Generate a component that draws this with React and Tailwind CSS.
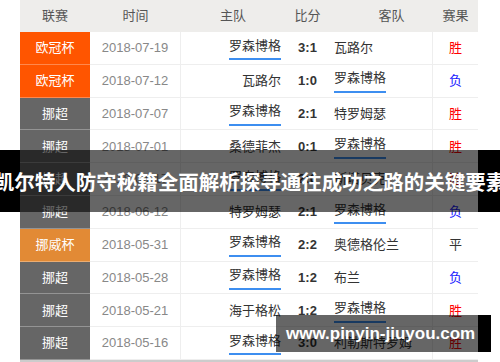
import React from "react";

const rows = [
  { league: "欧冠杯", type: "ucl", date: "2018-07-19", home: "罗森博格", score: "3:1", away: "瓦路尔", result: "胜" },
  { league: "欧冠杯", type: "ucl", date: "2018-07-12", home: "瓦路尔", score: "1:0", away: "罗森博格", result: "负" },
  { league: "挪超", type: "nor", date: "2018-07-07", home: "罗森博格", score: "2:1", away: "特罗姆瑟", result: "胜" },
  { league: "挪超", type: "nor", date: "2018-07-01", home: "桑德菲杰", score: "0:1", away: "罗森博格", result: "胜" },
  { league: "挪超", type: "nor", date: "2018-06-17", home: "罗森博格", score: "2:0", away: "斯塔贝克", result: "胜" },
  { league: "挪超", type: "nor", date: "2018-06-12", home: "特罗姆瑟", score: "2:1", away: "罗森博格", result: "负" },
  { league: "挪威杯", type: "cup", date: "2018-05-31", home: "罗森博格", score: "2:2", away: "奥德格伦兰", result: "平" },
  { league: "挪超", type: "nor", date: "2018-05-28", home: "罗森博格", score: "1:2", away: "布兰", result: "负" },
  { league: "挪超", type: "nor", date: "2018-05-21", home: "海于格松", score: "1:2", away: "罗森博格", result: "胜" },
  { league: "挪超", type: "nor", date: "2018-05-16", home: "罗森博格", score: "3:0", away: "利勒斯特罗姆", result: "胜" },
];

const leagueBg = {
  ucl: "bg-[#ff5500]",
  nor: "bg-[#666666]",
  cup: "bg-[#e28a35]",
};

const resultColor = {
  胜: "text-[#ff0000]",
  负: "text-[#1a1aff]",
  平: "text-[#333333]",
};

const cols = "grid grid-cols-[70px_91px_104px_45px_103px_45px]";

const Team = ({ name }) =>
  name === "罗森博格" ? (
    <span className="border-b-2 border-[#3d8ef0] pb-[3px]">{name}</span>
  ) : (
    <span>{name}</span>
  );

export default function App() {
  return (
    <div
      className="relative w-[500px] h-[362px] bg-white overflow-hidden text-[13px]"
      style={{ fontFamily: '"Liberation Sans", "Noto Sans CJK SC", sans-serif' }}
    >
      <div className="ml-[20px] w-[458px]">
        {/* header */}
        <div className={`${cols} h-[32px] bg-[#eeedeb] text-[#555] items-center`}>
          <div className="text-center">联赛</div>
          <div className="text-center">时间</div>
          <div className="text-center">主队</div>
          <div className="text-center">比分</div>
          <div className="text-center pl-[20px]">客队</div>
          <div className="text-center">赛果</div>
        </div>

        {/* rows */}
        {rows.map((r, i) => (
          <div key={i} className={`${cols} h-[32.8px] border-b border-[#eeeeee] items-stretch`}>
            <div className={`${leagueBg[r.type]} border-b border-white/30 -mb-px flex items-center justify-center text-white`}>
              {r.league}
            </div>
            <div className="flex items-center justify-center text-[#888] border-r border-[#eeeeee]">{r.date}</div>
            <div className="flex items-center justify-end pr-[4px] text-[#333]">
              <Team name={r.home} />
            </div>
            <div className="flex items-center justify-center font-bold text-[#333]">{r.score}</div>
            <div className="flex items-center pl-[4px] text-[#333] border-r border-[#eeeeee]">
              <Team name={r.away} />
            </div>
            <div className={`flex items-center justify-center ${resultColor[r.result]}`}>{r.result}</div>
          </div>
        ))}
        <div className="h-[2px] bg-[#cccccc]" />
      </div>

      {/* title band */}
      <div className="absolute left-0 top-[150px] w-[500px] h-[62px] flex">
        <div className="w-[20px] bg-black" />
        <div className="w-[458px] bg-black/60" />
        <div className="flex-1 bg-black" />
        <div
          className="absolute inset-0 flex items-center justify-center whitespace-nowrap text-white font-bold text-[20.5px]"
          style={{ fontFamily: '"Noto Sans CJK SC", sans-serif' }}
        >
          凯尔特人防守秘籍全面解析探寻通往成功之路的关键要素
        </div>
      </div>

      {/* watermark */}
      <div className="absolute left-[276px] top-[315px] w-[215px] h-[37px] flex">
        <div className="w-[202px] bg-black/60" />
        <div className="flex-1 bg-black" />
        <div className="absolute inset-0 flex items-center pl-[10px] text-white font-bold text-[17px] whitespace-nowrap">
          www.pinyin-jiuyou.com
        </div>
      </div>
    </div>
  );
}
